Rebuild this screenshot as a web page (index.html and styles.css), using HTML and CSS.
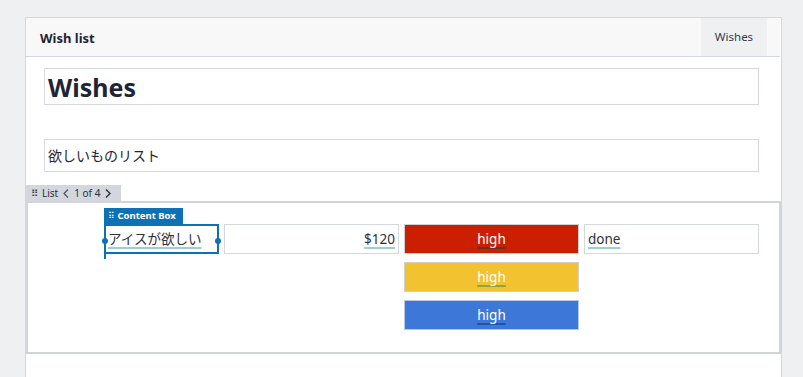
FILE: index.html
```html
<!DOCTYPE html>
<html>
<head>
    <link rel="stylesheet" href="styles.css">
</head>
<body>
    <div class="panel">
        <div class="panel-header">
            <div class="panel-title">Wish list</div>
            <div class="panel-tab">Wishes</div>
        </div>

        <div class="fields">
            <div class="field field-title">Wishes</div>
            <div class="field field-sub">欲しいものリスト</div>
        </div>

        <div class="list-tab">
            <span class="grip">⠿</span> List
            <svg class="nav" width="6" height="9" viewBox="0 0 6 9"><path d="M5 0.5 L1 4.5 L5 8.5" fill="none" stroke="#4d535e" stroke-width="1.2"/></svg>
            <span>1 of 4</span>
            <svg class="nav" width="6" height="9" viewBox="0 0 6 9"><path d="M1 0.5 L5 4.5 L1 8.5" fill="none" stroke="#2a2f3a" stroke-width="1.4"/></svg>
        </div>
        <div class="list">
            <div class="grid">
                <div class="cell cell-selected">
                    <div class="box-label"><span class="grip">⠿</span> Content Box</div>
                    <span class="handle handle-left"></span>
                    <span class="handle handle-right"></span>
                    <span class="line"></span>
                    <span class="txt">アイスが欲しい</span>
                </div>
                <div class="cell cell-right"><span class="txt">$120</span></div>
                <div class="cell tag red"><span class="txt">high</span></div>
                <div class="cell"><span class="txt">done</span></div>

                <div></div>
                <div></div>
                <div class="cell tag yellow"><span class="txt">high</span></div>
                <div></div>

                <div></div>
                <div></div>
                <div class="cell tag blue"><span class="txt">high</span></div>
                <div></div>
            </div>
        </div>
        <div class="rest"></div>
    </div>
</body>
</html>
```

FILE: styles.css
```css
body {
    margin: 0;
    background-color: #eef0f2;
    font-family: "Noto Sans", "Noto Sans CJK JP", sans-serif;
    color: #232a36;
    height: 377px;
    overflow: hidden;
}
.panel {
    margin: 17px 0 0 25px;
    width: 757px;
    height: 360px;
    box-sizing: border-box;
    background-color: #fff;
    border: 1px solid #d3d6db;
    border-bottom: none;
}
.panel-header {
    display: flex;
    justify-content: space-between;
    height: 38px;
    background-color: #f8f8f8;
    border-bottom: 1px solid #d5d8dc;
    margin-right: 1px;
}
.panel-title {
    padding-left: 14px;
    font-size: 13px;
    font-weight: bold;
    line-height: 40px;
    color: #1f2533;
}
.panel-tab {
    width: 66px;
    margin-right: 13px;
    background-color: #eff0f2;
    font-size: 11.5px;
    line-height: 38px;
    text-align: center;
    color: #333b48;
}
.fields {
    padding: 11px 22px 13px 18px;
}
.field {
    border: 1px solid #d5d8dc;
    box-sizing: border-box;
    padding-left: 3px;
}
.field-title {
    height: 37px;
    font-size: 25px;
    font-weight: bold;
    line-height: 36px;
    color: #1f2533;
}
.field-sub {
    margin-top: 34px;
    height: 33px;
    font-size: 14px;
    line-height: 31px;
    color: #1f2533;
}
.list-tab {
    display: flex;
    align-items: center;
    gap: 4px;
    width: fit-content;
    height: 16px;
    padding: 0 9px 0 5px;
    background-color: #d3d7dd;
    font-size: 10px;
    color: #2a2f3a;
}
.list-tab .grip {
    font-size: 10px;
}
.list-tab .nav {
    margin: 0 1px;
}
.list {
    border: 2px solid #d1d5db;
    padding: 21px 21px 22px 16px;
}
.grid {
    display: grid;
    grid-template-columns: repeat(4, 175px);
    grid-auto-rows: 30px;
    column-gap: 5px;
    row-gap: 8px;
}
.cell {
    position: relative;
    box-sizing: border-box;
    border: 1px solid #d5d8dc;
    padding: 0 3px;
    font-size: 13.5px;
    line-height: 28px;
    color: #2b2f40;
}
.txt {
    text-decoration: underline;
    text-decoration-color: rgba(40, 150, 130, 0.45);
    text-decoration-thickness: 2px;
    text-underline-offset: 3px;
}
.cell-right {
    text-align: right;
}
.cell-selected {
    margin-left: 60px;
    width: 115px;
    border: 2px solid #0d71b3;
    padding: 0 2px;
    line-height: 26px;
}
.box-label {
    position: absolute;
    left: -2px;
    top: -18px;
    height: 16px;
    padding: 0 7px 0 4px;
    background-color: #0d72b5;
    color: #fff;
    font-size: 9.5px;
    font-weight: bold;
    line-height: 16px;
    white-space: nowrap;
}
.box-label .grip {
    font-weight: normal;
    font-size: 9px;
}
.handle {
    position: absolute;
    top: 12px;
    width: 6px;
    height: 6px;
    border-radius: 50%;
    background-color: #0d71b3;
}
.handle-left {
    left: -4px;
}
.handle-right {
    right: -4px;
}
.line {
    position: absolute;
    left: -2px;
    top: -4px;
    width: 2px;
    height: 37px;
    background-color: #0d71b3;
}
.tag {
    text-align: center;
    color: #fff;
    border-color: #cfcfcf;
}
.red {
    background-color: #cc1f00;
}
.red .txt {
    text-decoration-color: rgba(40, 60, 60, 0.6);
}
.yellow {
    background-color: #f2c230;
}
.yellow .txt {
    text-decoration-color: rgba(60, 150, 90, 0.6);
}
.blue {
    background-color: #3d78d8;
    border-color: #b8c8e6;
}
.blue .txt {
    text-decoration-color: rgba(20, 80, 150, 0.8);
}
```
